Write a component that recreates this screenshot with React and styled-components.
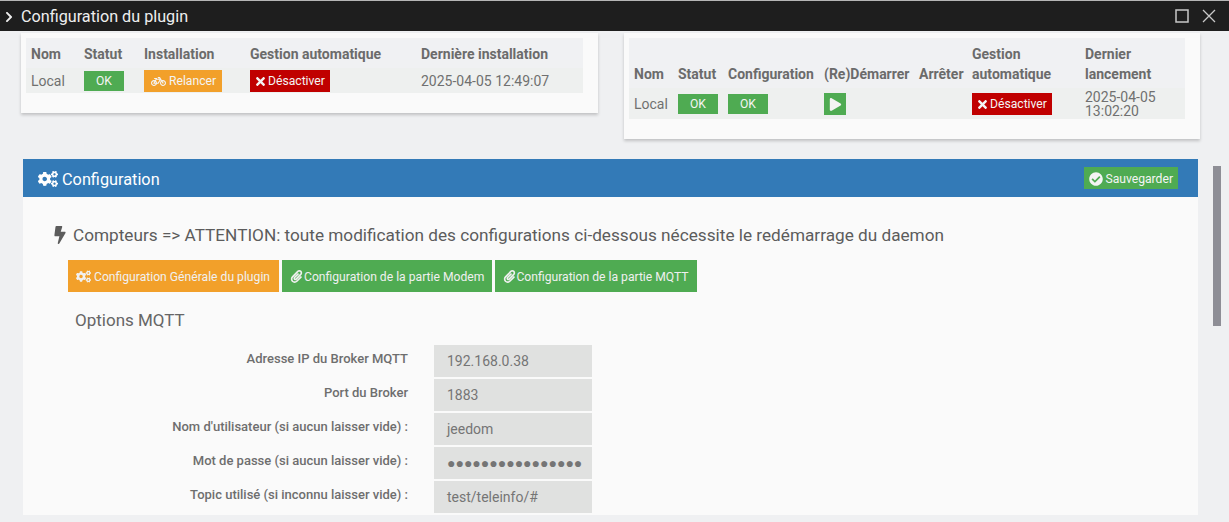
import React from "react";
import styled, { createGlobalStyle } from "styled-components";
import {
  FaBicycle,
  FaBolt,
  FaCheckCircle,
  FaChevronRight,
  FaCogs,
  FaPaperclip,
  FaPlay,
  FaTimes,
} from "react-icons/fa";

const GlobalStyle = createGlobalStyle`
  html, body {
    margin: 0;
    padding: 0;
    background: #eff0f2;
    overflow: hidden;
  }
  body {
    font-family: Roboto, "Liberation Sans", sans-serif;
    color: #666;
  }
`;

const Page = styled.div`
  position: relative;
  width: 1229px;
  height: 522px;
  overflow: hidden;
  background: #eff0f2;
`;

const TitleBar = styled.header`
  display: flex;
  align-items: center;
  height: 28px;
  padding: 2px 13px 0 3px;
  background: #1e1e1e;
  border-top: 1px solid #b5b5b5;
  color: #eee;
`;

const Title = styled.h1`
  flex: 1;
  margin: 0 0 0 6px;
  font-size: 16.2px;
  font-weight: 400;
  line-height: 28px;
`;

const WindowIcons = styled.div`
  display: flex;
  align-items: center;
  gap: 13px;
  margin-bottom: 2px;
  color: #c8c8c8;
`;

const Cards = styled.div`
  display: flex;
  align-items: flex-start;
  gap: 26px;
  margin-top: 2px;
  padding-left: 21px;
`;

const Card = styled.section`
  width: ${(p) => p.$width}px;
  height: ${(p) => p.$height}px;
  padding: 5px 15px 0 5px;
  box-sizing: border-box;
  background: #fafafa;
  box-shadow: 0 2px 3px rgba(0, 0, 0, 0.2);
`;

const Table = styled.table`
  width: 100%;
  table-layout: fixed;
  border-collapse: collapse;
  font-size: 14px;
`;

const Head = styled.th`
  padding: 0 0 4px 5px;
  height: ${(p) => p.$height}px;
  box-sizing: border-box;
  background: #f0f1f3;
  color: #6b6b6b;
  font-weight: 700;
  line-height: 20px;
  text-align: left;
  vertical-align: bottom;
`;

const Cell = styled.td`
  padding: ${(p) => (p.$text ? "1px" : "0")} 0 0 5px;
  height: ${(p) => p.$height}px;
  box-sizing: border-box;
  background: #eef0ef;
  color: #707070;
  font-size: 14px;
  line-height: 14px;
  vertical-align: middle;
`;

const Badge = styled.span`
  display: inline-flex;
  align-items: center;
  justify-content: center;
  gap: 3px;
  height: ${(p) => p.$height || 20}px;
  width: ${(p) => (p.$width ? `${p.$width}px` : "auto")};
  padding: 1px ${(p) => (p.$width ? "0" : "5px")} 0;
  box-sizing: border-box;
  background: ${(p) => p.$color};
  color: #f4f4f4;
  font-size: 12.15px;
  vertical-align: middle;
`;

const DisableBadge = styled(Badge)`
  gap: 1px;
  padding: 1px 5px 0 4px;
`;

const RestartBadge = styled(Badge)`
  padding: 1px 6px 0 7px;
`;

const SaveBadge = styled(Badge)`
  gap: 2px;
`;

const Panel = styled.section`
  width: 1175px;
  margin: 20px 0 0 23px;
`;

const PanelHeading = styled.div`
  display: flex;
  align-items: center;
  justify-content: space-between;
  height: 38px;
  padding: 0 20px 0 15px;
  background: #337ab7;
  color: #fff;
`;

const PanelTitle = styled.h2`
  display: flex;
  align-items: center;
  gap: 4px;
  margin: 0;
  padding-top: 2px;
  font-size: 16.3px;
  font-weight: 400;
`;

const PanelBody = styled.div`
  height: 318px;
  padding: 27px 0 0 30px;
  box-sizing: border-box;
  background: #fafafa;
`;

const Notice = styled.div`
  display: flex;
  align-items: center;
  gap: 4px;
  margin-left: -2px;
  font-size: 17.2px;
  line-height: 22px;
  color: #5c5c5c;
  white-space: nowrap;
`;

const Tabs = styled.div`
  display: flex;
  gap: 3px;
  margin: 14px 0 0 15px;

  & > :first-child {
    padding-right: 9px;
  }
`;

const Tab = styled.span`
  display: inline-flex;
  align-items: center;
  gap: ${(p) => p.$gap}px;
  height: 32px;
  padding: 1px 8px 0;
  box-sizing: border-box;
  background: ${(p) => p.$color};
  color: #f0f0f0;
  font-size: 12.15px;
`;

const SectionTitle = styled.h3`
  margin: 18px 0 15px 22px;
  font-size: 17px;
  font-weight: 400;
  line-height: 20px;
  color: #666;
`;

const Form = styled.div`
  display: grid;
  grid-template-columns: 355px 158px;
  column-gap: 26px;
  row-gap: 2px;
`;

const Label = styled.label`
  height: 32px;
  padding-top: 5px;
  box-sizing: border-box;
  font-size: 13px;
  font-weight: 500;
  line-height: 18px;
  text-align: right;
  color: #6e6e6e;
`;

const Value = styled.div`
  height: 32px;
  padding-left: 13px;
  box-sizing: border-box;
  background: #e0e1e0;
  font-size: 14px;
  line-height: 32px;
  color: #757575;
  white-space: nowrap;
  overflow: hidden;
`;

const Scrollbar = styled.div`
  position: absolute;
  top: 166px;
  left: 1213px;
  width: 8px;
  height: 160px;
  background: #8e8e96;
`;

const GREEN = "#4fab52";
const ORANGE = "#f2a02a";
const RED = "#c00000";

const fields = [
  ["Adresse IP du Broker MQTT", "192.168.0.38"],
  ["Port du Broker", "1883"],
  ["Nom d'utilisateur (si aucun laisser vide) :", "jeedom"],
  ["Mot de passe (si aucun laisser vide) :", "●●●●●●●●●●●●●●●●"],
  ["Topic utilisé (si inconnu laisser vide) :", "test/teleinfo/#"],
];

const Disable = () => (
  <DisableBadge $color={RED} $height={22}>
    <FaTimes size={13} />
    Désactiver
  </DisableBadge>
);

export default function App() {
  return (
    <Page>
      <GlobalStyle />
      <TitleBar>
        <FaChevronRight size={12} />
        <Title>Configuration du plugin</Title>
        <WindowIcons>
          <svg width="14" height="14" viewBox="0 0 14 14" fill="none" stroke="currentColor" strokeWidth="1.5">
            <rect x="1" y="1" width="12" height="12" />
          </svg>
          <svg width="14" height="14" viewBox="0 0 14 14" fill="none" stroke="currentColor" strokeWidth="1.3">
            <path d="M1 1l12 12M13 1L1 13" />
          </svg>
        </WindowIcons>
      </TitleBar>

      <Cards>
        <Card $width={577} $height={80}>
          <Table>
            <colgroup>
              <col width="53" />
              <col width="60" />
              <col width="106" />
              <col width="171" />
              <col />
            </colgroup>
            <thead>
              <tr>
                <Head $height={30}>Nom</Head>
                <Head $height={30}>Statut</Head>
                <Head $height={30}>Installation</Head>
                <Head $height={30}>Gestion automatique</Head>
                <Head $height={30}>Dernière installation</Head>
              </tr>
            </thead>
            <tbody>
              <tr>
                <Cell $height={25} $text>Local</Cell>
                <Cell $height={25}>
                  <Badge $color={GREEN} $width={40}>OK</Badge>
                </Cell>
                <Cell $height={25}>
                  <RestartBadge $color={ORANGE} $height={22}>
                    <FaBicycle size={15} />
                    Relancer
                  </RestartBadge>
                </Cell>
                <Cell $height={25}>
                  <Disable />
                </Cell>
                <Cell $height={25} $text>2025-04-05 12:49:07</Cell>
              </tr>
            </tbody>
          </Table>
        </Card>

        <Card $width={576} $height={106}>
          <Table>
            <colgroup>
              <col width="44" />
              <col width="50" />
              <col width="96" />
              <col width="95" />
              <col width="53" />
              <col width="113" />
              <col />
            </colgroup>
            <thead>
              <tr>
                <Head $height={50}>Nom</Head>
                <Head $height={50}>Statut</Head>
                <Head $height={50}>Configuration</Head>
                <Head $height={50}>(Re)Démarrer</Head>
                <Head $height={50}>Arrêter</Head>
                <Head $height={50}>Gestion automatique</Head>
                <Head $height={50}>Dernier lancement</Head>
              </tr>
            </thead>
            <tbody>
              <tr>
                <Cell $height={31} $text>Local</Cell>
                <Cell $height={31}>
                  <Badge $color={GREEN} $width={40}>OK</Badge>
                </Cell>
                <Cell $height={31}>
                  <Badge $color={GREEN} $width={40}>OK</Badge>
                </Cell>
                <Cell $height={31}>
                  <Badge $color={GREEN} $width={22} $height={22}>
                    <FaPlay size={13} />
                  </Badge>
                </Cell>
                <Cell $height={31} />
                <Cell $height={31}>
                  <Disable />
                </Cell>
                <Cell $height={31} $text>2025-04-05 13:02:20</Cell>
              </tr>
            </tbody>
          </Table>
        </Card>
      </Cards>

      <Panel>
        <PanelHeading>
          <PanelTitle>
            <FaCogs size={20} />
            Configuration
          </PanelTitle>
          <SaveBadge $color={GREEN} $height={22}>
            <FaCheckCircle size={14} />
            Sauvegarder
          </SaveBadge>
        </PanelHeading>
        <PanelBody>
          <Notice>
            <FaBolt size={18} />
            Compteurs =&gt; ATTENTION: toute modification des configurations ci-dessous nécessite le redémarrage du daemon
          </Notice>
          <Tabs>
            <Tab $color={ORANGE} $gap={3}>
              <FaCogs size={15} />
              Configuration Générale du plugin
            </Tab>
            <Tab $color={GREEN} $gap={1}>
              <FaPaperclip size={13} />
              Configuration de la partie Modem
            </Tab>
            <Tab $color={GREEN} $gap={0}>
              <FaPaperclip size={13} />
              Configuration de la partie MQTT
            </Tab>
          </Tabs>
          <SectionTitle>Options MQTT</SectionTitle>
          <Form>
            {fields.map(([label, value]) => (
              <React.Fragment key={label}>
                <Label>{label}</Label>
                <Value>{value}</Value>
              </React.Fragment>
            ))}
          </Form>
        </PanelBody>
      </Panel>
      <Scrollbar />
    </Page>
  );
}
